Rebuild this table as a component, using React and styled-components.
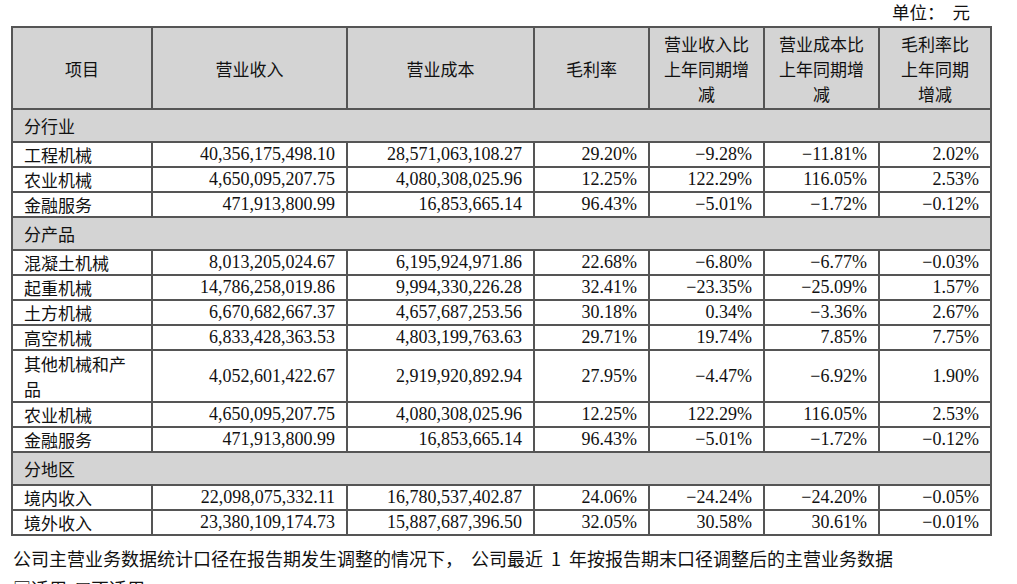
import React from "react";
import styled, { createGlobalStyle } from "styled-components";

const GlobalStyle = createGlobalStyle`
  html, body {
    margin: 0;
    padding: 0;
    background: #fff;
  }
  body {
    font-family: "Liberation Serif", "Noto Sans CJK SC", serif;
    color: #111;
  }
`;

const sections = [
  {
    title: "分行业",
    rows: [
      ["工程机械", "40,356,175,498.10", "28,571,063,108.27", "29.20%", "-9.28%", "-11.81%", "2.02%"],
      ["农业机械", "4,650,095,207.75", "4,080,308,025.96", "12.25%", "122.29%", "116.05%", "2.53%"],
      ["金融服务", "471,913,800.99", "16,853,665.14", "96.43%", "-5.01%", "-1.72%", "-0.12%"],
    ],
  },
  {
    title: "分产品",
    rows: [
      ["混凝土机械", "8,013,205,024.67", "6,195,924,971.86", "22.68%", "-6.80%", "-6.77%", "-0.03%"],
      ["起重机械", "14,786,258,019.86", "9,994,330,226.28", "32.41%", "-23.35%", "-25.09%", "1.57%"],
      ["土方机械", "6,670,682,667.37", "4,657,687,253.56", "30.18%", "0.34%", "-3.36%", "2.67%"],
      ["高空机械", "6,833,428,363.53", "4,803,199,763.63", "29.71%", "19.74%", "7.85%", "7.75%"],
      ["其他机械和产品", "4,052,601,422.67", "2,919,920,892.94", "27.95%", "-4.47%", "-6.92%", "1.90%"],
      ["农业机械", "4,650,095,207.75", "4,080,308,025.96", "12.25%", "122.29%", "116.05%", "2.53%"],
      ["金融服务", "471,913,800.99", "16,853,665.14", "96.43%", "-5.01%", "-1.72%", "-0.12%"],
    ],
  },
  {
    title: "分地区",
    rows: [
      ["境内收入", "22,098,075,332.11", "16,780,537,402.87", "24.06%", "-24.24%", "-24.20%", "-0.05%"],
      ["境外收入", "23,380,109,174.73", "15,887,687,396.50", "32.05%", "30.58%", "30.61%", "-0.01%"],
    ],
  },
];

const colWidths = [140, 195, 187, 115, 115, 115, 112];

const headers = [
  ["项目"],
  ["营业收入"],
  ["营业成本"],
  ["毛利率"],
  ["营业收入比", "上年同期增", "减"],
  ["营业成本比", "上年同期增", "减"],
  ["毛利率比", "上年同期", "增减"],
];

// the source prints a long minus sign
const fmt = (v) => v.replace(/^-/, "\u2212");

const Page = styled.div`
  width: 979px;
  padding: 0 0 0 11px;
`;

const Unit = styled.div`
  height: 26px;
  line-height: 24px;
  text-align: right;
  padding-right: 20px;
  font-family: "Noto Sans CJK SC", sans-serif;
  font-size: 17.5px;
  word-spacing: 4px;
`;

const Table = styled.table`
  width: 979px;
  table-layout: fixed;
  border-collapse: collapse;
  border: 2px solid #555;
`;

const HeadCell = styled.th`
  height: 80px;
  background: #d4d4d4;
  border: 2px solid #555;
  font-family: "Noto Sans CJK SC", sans-serif;
  font-weight: 400;
  font-size: 17px;
  line-height: 25px;
  text-align: center;
  padding: 0;
`;

const SectionCell = styled.td`
  height: 31px;
  background: #d4d4d4;
  border: 2px solid #555;
  font-family: "Noto Sans CJK SC", sans-serif;
  font-size: 17px;
  padding: 0 11px;
`;

const Cell = styled.td`
  height: ${(p) => (p.$tall ? 50 : 23)}px;
  border: 2px solid #555;
  padding: 0 11px;
  line-height: ${(p) => (p.$tall && p.$label ? 25 : 23)}px;
  font-size: ${(p) => (p.$label ? 17 : 18)}px;
  font-family: ${(p) =>
    p.$label ? `"Noto Sans CJK SC", sans-serif` : `"Liberation Serif", serif`};
  text-align: ${(p) => (p.$label ? "left" : "right")};
  white-space: ${(p) => (p.$label ? "normal" : "nowrap")};
  word-break: break-all;
`;

const Note = styled.p`
  margin: 7px 0 0 2px;
  font-family: "Noto Sans CJK SC", sans-serif;
  font-size: 18px;
  line-height: 30px;
  white-space: nowrap;
  word-spacing: 4px;
`;

export default function App() {
  return (
    <>
      <GlobalStyle />
      <Page>
        <Unit>单位： 元</Unit>
        <Table>
          <colgroup>
            {colWidths.map((w, i) => (
              <col key={i} style={{ width: w }} />
            ))}
          </colgroup>
          <thead>
            <tr>
              {headers.map((lines, i) => (
                <HeadCell key={i}>
                  {lines.map((l, j) => (
                    <React.Fragment key={j}>
                      {j > 0 && <br />}
                      {l}
                    </React.Fragment>
                  ))}
                </HeadCell>
              ))}
            </tr>
          </thead>
          <tbody>
            {sections.map((s) => (
              <React.Fragment key={s.title}>
                <tr>
                  <SectionCell colSpan={7}>{s.title}</SectionCell>
                </tr>
                {s.rows.map((r, ri) => (
                  <tr key={ri}>
                    {r.map((v, ci) => (
                      <Cell key={ci} $label={ci === 0} $tall={r[0].length > 5}>
                        {ci === 0 ? v : fmt(v)}
                      </Cell>
                    ))}
                  </tr>
                ))}
              </React.Fragment>
            ))}
          </tbody>
        </Table>
        <Note>
          公司主营业务数据统计口径在报告期发生调整的情况下， 公司最近 1 年按报告期末口径调整后的主营业务数据
          <br />
          □适用 ☑不适用
        </Note>
      </Page>
    </>
  );
}
